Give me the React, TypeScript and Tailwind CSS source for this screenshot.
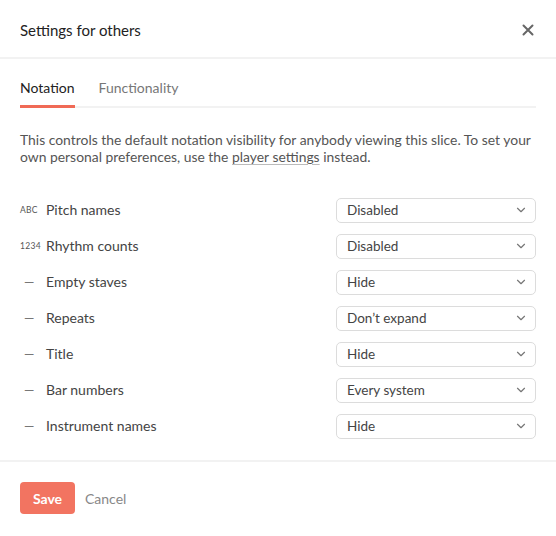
import { ChevronDown } from "lucide-react";

const rows = [
    { icon: "ABC", label: "Pitch names", value: "Disabled" },
    { icon: "1234", label: "Rhythm counts", value: "Disabled" },
    { icon: "—", label: "Empty staves", value: "Hide" },
    { icon: "—", label: "Repeats", value: "Don’t expand" },
    { icon: "—", label: "Title", value: "Hide" },
    { icon: "—", label: "Bar numbers", value: "Every system" },
    { icon: "—", label: "Instrument names", value: "Hide" }
];

function RowIcon({ icon }: { icon: string }) {
    if (icon === "—") {
        return <span className="w-[26px] pl-[4px] text-[13px] leading-none text-[#777]">—</span>;
    }
    return <span className="w-[26px] pt-[1px] text-[8.5px] leading-none tracking-[0.3px] text-[#555]">{icon}</span>;
}

export default function App() {
    return (
        <div className="w-[556px] h-[536px] bg-white font-['Lato','Liberation_Sans',sans-serif] text-[#333]">
            {/* Header */}
            <div className="h-[59px] px-5 pt-[3px] flex items-center justify-between border-b-2 border-[#f2f2f2]">
                <h1 className="text-[15px] text-[#222]">Settings for others</h1>
                <svg width="12" height="12" viewBox="0 0 12 12" className="mr-[2px]">
                    <path d="M1.5 1.5L10.5 10.5M10.5 1.5L1.5 10.5" stroke="#666" strokeWidth="2" strokeLinecap="round" />
                </svg>
            </div>

            <div className="px-5">
                {/* Tabs */}
                <div className="flex gap-6 pt-[19px] border-b-2 border-[#f2f2f2]">
                    <div className="pb-[7px] -mb-[2px] border-b-[3px] border-[#f06a56] text-[14px] leading-5 text-[#222]">
                        Notation
                    </div>
                    <div className="pb-[7px] text-[14px] leading-5 text-[#777]">Functionality</div>
                </div>

                <p className="mt-[23px] text-[13.9px] leading-[17px] text-[#555]">
                    This controls the default notation visibility for anybody viewing this slice. To set your own
                    personal preferences, use the{" "}
                    <span className="underline decoration-[#bbb] underline-offset-2">player settings</span> instead.
                </p>

                {/* Settings rows */}
                <div className="mt-[27px]">
                    {rows.map((row) => (
                        <div key={row.label} className="h-[36px] flex items-center">
                            <RowIcon icon={row.icon} />
                            <span className="flex-1 pb-[1px] text-[14px] text-[#444]">{row.label}</span>
                            <div className="w-[200px] h-[25px] flex items-center justify-between pl-[10px] pr-[7px] border border-[#dcdcdc] rounded-[5px] text-[13.5px] text-[#444]">
                                <span>{row.value}</span>
                                <ChevronDown size={14} strokeWidth={2} className="text-[#777]" />
                            </div>
                        </div>
                    ))}
                </div>
            </div>

            {/* Footer */}
            <div className="mt-[16px] border-t-2 border-[#f2f2f2] px-5 pt-[20px] flex items-center gap-[10px]">
                <button className="h-[32px] w-[55px] rounded-[4px] bg-[#f27461] text-white text-[14px] font-bold">
                    Save
                </button>
                <span className="text-[14px] text-[#888]">Cancel</span>
            </div>
        </div>
    );
}
